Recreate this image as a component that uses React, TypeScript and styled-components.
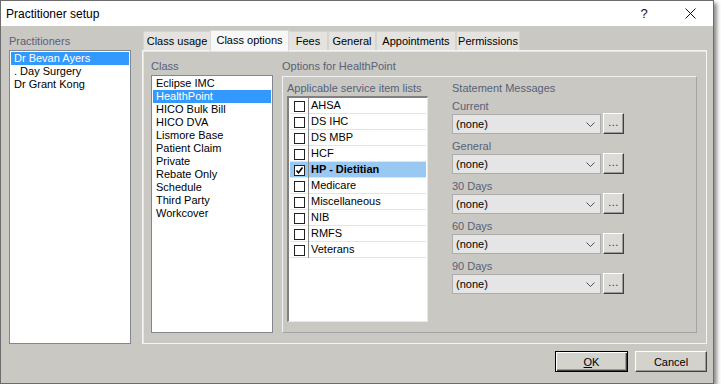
import React from 'react';
import styled, {createGlobalStyle} from 'styled-components';

const face = '#cac8c2';
const labelInk = '#56617a';

const practitioners = ['Dr Bevan Ayers', '. Day Surgery', 'Dr Grant Kong'];
const tabs = [
  {label: 'Class usage', width: 68},
  {label: 'Class options', width: 77},
  {label: 'Fees', width: 40},
  {label: 'General', width: 48},
  {label: 'Appointments', width: 80},
  {label: 'Permissions', width: 64},
];
const classes = [
  'Eclipse IMC',
  'HealthPoint',
  'HICO Bulk Bill',
  'HICO DVA',
  'Lismore Base',
  'Patient Claim',
  'Private',
  'Rebate Only',
  'Schedule',
  'Third Party',
  'Workcover',
];
const itemLists = [
  'AHSA',
  'DS IHC',
  'DS MBP',
  'HCF',
  'HP - Dietitian',
  'Medicare',
  'Miscellaneous',
  'NIB',
  'RMFS',
  'Veterans',
];
const messages = ['Current', 'General', '30 Days', '60 Days', '90 Days'];

export default function App() {
  return (
    <>
      <Global />
      <Window>
        <TitleBar>
          <Title>Practitioner setup</Title>
          <CaptionButton>?</CaptionButton>
          <CaptionButton>
            <svg width="11" height="11" viewBox="0 0 11 11">
              <path d="M0.5 0.5 L10.5 10.5 M10.5 0.5 L0.5 10.5" stroke="#111" strokeWidth="1" />
            </svg>
          </CaptionButton>
        </TitleBar>

        <Body>
          <Main>
            <LeftColumn>
              <Label>Practitioners</Label>
              <ListBox $height={294}>
                {practitioners.map((p, i) => (
                  <ListItem key={p} $selected={i === 0}>
                    {p}
                  </ListItem>
                ))}
              </ListBox>
            </LeftColumn>

            <TabControl>
              <TabStrip>
                {tabs.map((t) => (
                  <Tab key={t.label} $active={t.label === 'Class options'} $width={t.width}>
                    {t.label}
                  </Tab>
                ))}
              </TabStrip>
              <TabPage>
                <ClassColumn>
                  <Label>Class</Label>
                  <ListBox $height={258}>
                    {classes.map((c) => (
                      <ListItem key={c} $selected={c === 'HealthPoint'}>
                        {c}
                      </ListItem>
                    ))}
                  </ListBox>
                </ClassColumn>

                <OptionsColumn>
                  <Label>Options for HealthPoint</Label>
                  <OptionsPanel>
                    <ItemListsColumn>
                      <Label>Applicable service item lists</Label>
                      <CheckList>
                        {itemLists.map((name) => {
                          const on = name === 'HP - Dietitian';
                          return (
                            <CheckRow key={name} $selected={on}>
                              <CheckCell>
                                <CheckBox>
                                  {on && (
                                    <svg width="9" height="9" viewBox="0 0 9 9">
                                      <path d="M1.5 4.5 L3.5 6.8 L7.5 1.5" fill="none" stroke="#000" strokeWidth="1.6" />
                                    </svg>
                                  )}
                                </CheckBox>
                              </CheckCell>
                              <CheckText $bold={on}>{name}</CheckText>
                            </CheckRow>
                          );
                        })}
                      </CheckList>
                    </ItemListsColumn>

                    <MessagesColumn>
                      <Label>Statement Messages</Label>
                      {messages.map((m) => (
                        <MessageGroup key={m}>
                          <Label>{m}</Label>
                          <ComboRow>
                            <Combo>
                              <span>(none)</span>
                              <svg width="9" height="5" viewBox="0 0 9 5">
                                <path d="M0.5 0.5 L4.5 4.5 L8.5 0.5" fill="none" stroke="#555" strokeWidth="1" />
                              </svg>
                            </Combo>
                            <EllipsisButton>...</EllipsisButton>
                          </ComboRow>
                        </MessageGroup>
                      ))}
                    </MessagesColumn>
                  </OptionsPanel>
                </OptionsColumn>
              </TabPage>
            </TabControl>
          </Main>

          <Footer>
            <DialogButton $default $width={73}>
              <u>O</u>K
            </DialogButton>
            <DialogButton $width={72}>Cancel</DialogButton>
          </Footer>
        </Body>
      </Window>
    </>
  );
}

const Global = createGlobalStyle`
  body {
    margin: 0;
    background: #ffffff;
    font-family: "Liberation Sans", Arial, sans-serif;
    font-size: 11px;
  }
`;

const Window = styled.div`
  width: 714px;
  height: 384px;
  box-sizing: border-box;
  border: 1px solid #6c6c6c;
  background: ${face};
  box-shadow: 3px 3px 4px rgba(0, 0, 0, 0.45);
  display: flex;
  flex-direction: column;
`;

const TitleBar = styled.div`
  height: 25px;
  background: #ffffff;
  display: flex;
  align-items: center;
  padding-left: 5px;
`;

const Title = styled.div`
  flex: 1;
  font-size: 12px;
  color: #000;
`;

const CaptionButton = styled.div`
  width: 46px;
  height: 25px;
  display: flex;
  align-items: center;
  justify-content: center;
  font-size: 13px;
  color: #111;
`;

const Body = styled.div`
  flex: 1;
  display: flex;
  flex-direction: column;
  padding: 4px 6px 0 8px;
`;

const Main = styled.div`
  display: flex;
  gap: 11px;
`;

const LeftColumn = styled.div`
  width: 122px;
  padding-top: 5px;
  display: flex;
  flex-direction: column;
`;

const Label = styled.div`
  height: 13px;
  line-height: 13px;
  margin-bottom: 2px;
  color: ${labelInk};
  white-space: nowrap;
`;

const ListBox = styled.div<{$height: number}>`
  height: ${(p) => p.$height}px;
  box-sizing: border-box;
  background: #fff;
  border: 1px solid #828790;
  padding: 1px;
`;

const ListItem = styled.div<{$selected?: boolean}>`
  height: 13px;
  line-height: 13px;
  padding-left: 3px;
  white-space: nowrap;
  color: ${(p) => (p.$selected ? '#fff' : '#000')};
  background: ${(p) => (p.$selected ? '#3399ff' : 'transparent')};
`;

const TabControl = styled.div`
  width: 565px;
  display: flex;
  flex-direction: column;
`;

const TabStrip = styled.div`
  height: 20px;
  display: flex;
  align-items: flex-end;
  padding-left: 1px;
`;

const Tab = styled.div<{$active?: boolean; $width: number}>`
  position: relative;
  z-index: ${(p) => (p.$active ? 1 : 0)};
  width: ${(p) => p.$width + (p.$active ? 2 : 0)}px;
  height: ${(p) => (p.$active ? 21 : 19)}px;
  line-height: ${(p) => (p.$active ? 19 : 18)}px;
  margin: ${(p) => (p.$active ? '0 -1px -1px' : '0')};
  box-sizing: border-box;
  text-align: center;
  background: ${(p) => (p.$active ? '#f7f7f7' : '#e4e3e0')};
  border: 1px solid ${(p) => (p.$active ? '#d9d9d9' : '#d4d3cf')};
  border-bottom: none;
  color: #000;
  white-space: nowrap;
`;

const TabPage = styled.div`
  height: 294px;
  box-sizing: border-box;
  border: 1px solid #f4f4f4;
  box-shadow: inset 1px 1px 0 #e6e5e2;
  padding: 9px 9px 0 8px;
  display: flex;
  gap: 9px;
`;

const ClassColumn = styled.div`
  width: 122px;
  display: flex;
  flex-direction: column;
`;

const OptionsColumn = styled.div`
  flex: 1;
  display: flex;
  flex-direction: column;
`;

const OptionsPanel = styled.div`
  height: 257px;
  box-sizing: border-box;
  margin-top: 1px;
  border: 1px solid #a4a4a4;
  border-top-color: #f2f2f2;
  border-left-color: #f2f2f2;
  padding: 5px 0 0 4px;
  display: flex;
  gap: 24px;
`;

const ItemListsColumn = styled.div`
  display: flex;
  flex-direction: column;
`;

const CheckList = styled.div`
  width: 141px;
  height: 226px;
  box-sizing: border-box;
  margin-top: -1px;
  background: #fff;
  border-top: 2px solid #808080;
  border-left: 2px solid #808080;
  border-right: 1px solid #e8e8e8;
  border-bottom: 1px solid #e8e8e8;
  padding: 0 1px;
`;

const CheckRow = styled.div<{$selected?: boolean}>`
  height: 16px;
  box-sizing: border-box;
  display: grid;
  grid-template-columns: 19px 1fr;
  border-bottom: 1px solid #e4e4e4;
  background: ${(p) => (p.$selected ? '#99c9f3' : 'transparent')};
`;

const CheckCell = styled.div`
  border-right: 1px solid #8c8c8c;
  margin-bottom: -1px;
  display: flex;
  align-items: center;
  justify-content: center;
`;

const CheckBox = styled.div`
  width: 11px;
  height: 11px;
  box-sizing: border-box;
  border: 1px solid #222;
  background: #fff;
  display: flex;
  align-items: center;
  justify-content: center;
`;

const CheckText = styled.div<{$bold?: boolean}>`
  padding-left: 2px;
  line-height: 15px;
  font-weight: ${(p) => (p.$bold ? 'bold' : 'normal')};
  color: #000;
  white-space: nowrap;
`;

const MessagesColumn = styled.div`
  display: flex;
  flex-direction: column;
  gap: 3px;
`;

const MessageGroup = styled.div`
  display: flex;
  flex-direction: column;
  margin-bottom: 3px;

  ${Label} {
    margin-bottom: 0;
  }
`;

const ComboRow = styled.div`
  display: flex;
  align-items: center;
  gap: 2px;
  height: 21px;
`;

const Combo = styled.div`
  width: 149px;
  height: 20px;
  margin-top: 1px;
  box-sizing: border-box;
  background: #e5e5e5;
  border: 1px solid #adadad;
  padding: 0 5px 0 3px;
  display: flex;
  align-items: center;
  justify-content: space-between;
  color: #000;
`;

const EllipsisButton = styled.div`
  width: 21px;
  height: 21px;
  box-sizing: border-box;
  background: #dcdad6;
  border: 1px solid;
  border-color: #fff #404040 #404040 #fff;
  box-shadow: inset -1px -1px 0 #9a9a9a;
  display: flex;
  align-items: center;
  justify-content: center;
  padding-bottom: 3px;
  color: #1e2a5a;
  letter-spacing: 0.5px;
`;

const Footer = styled.div`
  display: flex;
  justify-content: flex-end;
  gap: 7px;
  padding-top: 7px;
`;

const DialogButton = styled.div<{$default?: boolean; $width: number}>`
  width: ${(p) => p.$width}px;
  height: 21px;
  box-sizing: border-box;
  background: #d4d2cd;
  border: 1px solid;
  border-color: ${(p) => (p.$default ? '#000' : '#fff #404040 #404040 #fff')};
  box-shadow: ${(p) =>
    p.$default
      ? 'inset 1px 1px 0 #fff, inset -1px -1px 0 #404040, inset -2px -2px 0 #9a9a9a'
      : 'inset -1px -1px 0 #9a9a9a'};
  display: flex;
  align-items: center;
  justify-content: center;
  color: #000;
  font-size: 11px;
`;
